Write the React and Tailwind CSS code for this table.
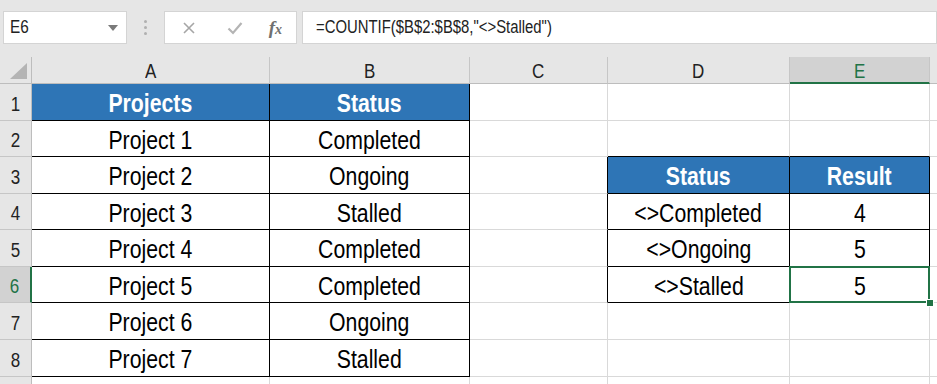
import React from 'react';

const COLS = ['A', 'B', 'C', 'D', 'E'];

// sheet contents, keyed by row number
const cells = {
  1: { A: 'Projects', B: 'Status' },
  2: { A: 'Project 1', B: 'Completed' },
  3: { A: 'Project 2', B: 'Ongoing', D: 'Status', E: 'Result' },
  4: { A: 'Project 3', B: 'Stalled', D: '<>Completed', E: '4' },
  5: { A: 'Project 4', B: 'Completed', D: '<>Ongoing', E: '5' },
  6: { A: 'Project 5', B: 'Completed', D: '<>Stalled', E: '5' },
  7: { A: 'Project 6', B: 'Ongoing' },
  8: { A: 'Project 7', B: 'Stalled' },
};

const heads = [
  [1, 'A'], [1, 'B'], [3, 'D'], [3, 'E'],
];

const inTable = (r, c) =>
  ((c === 'A' || c === 'B') && r >= 1 && r <= 8) ||
  ((c === 'D' || c === 'E') && r >= 3 && r <= 6);

const isHead = (r, c) => heads.some(([hr, hc]) => hr === r && hc === c);

const nextCol = (c) => COLS[COLS.indexOf(c) + 1];

function Txt({ children, className = '' }) {
  return <span className={`inline-block scale-x-[0.85] whitespace-nowrap ${className}`}>{children}</span>;
}

function Cell({ r, c }) {
  const right = inTable(r, c) || inTable(r, nextCol(c)) ? 'border-r-black' : 'border-r-[#d9d9d9]';
  const bottom = inTable(r, c) || inTable(r + 1, c) ? 'border-b-black' : 'border-b-[#d9d9d9]';
  const head = isHead(r, c);
  const value = cells[r]?.[c];
  const selected = r === 6 && c === 'E';
  return (
    <div
      className={`relative flex items-center justify-center pt-[3px] border-r border-b ${right} ${bottom} ${
        head ? 'bg-[#2e75b6] text-white font-bold' : 'bg-white text-black'
      } ${selected ? 'z-10' : ''} text-[25px] leading-none`}
    >
      {value && <Txt>{value}</Txt>}
      {selected && (
        <>
          <div className="absolute -left-px -top-px -right-px -bottom-px border-2 border-[#217346]" />
          <div className="absolute -right-[5px] -bottom-[5px] w-[8px] h-[8px] bg-[#217346] border border-white" />
        </>
      )}
    </div>
  );
}

function FormulaBar() {
  return (
    <div className="h-[57px] bg-[#e6e6e6] flex items-start pt-[11px] pl-[3px]">
      <div className="w-[124px] h-[33px] bg-white border border-[#d4d4d4] flex items-center justify-between pl-[6px] pr-[8px]">
        <Txt className="origin-left text-[18px] text-[#222]">E6</Txt>
        <svg width="10" height="6" viewBox="0 0 10 6">
          <path d="M0 0 L10 0 L5 6 Z" fill="#7a7a7a" />
        </svg>
      </div>
      <div className="w-[37px] h-[33px] flex flex-col items-center justify-center gap-[3px]">
        <div className="w-[3px] h-[3px] rounded-full bg-[#b0b0b0]" />
        <div className="w-[3px] h-[3px] rounded-full bg-[#b0b0b0]" />
        <div className="w-[3px] h-[3px] rounded-full bg-[#b0b0b0]" />
      </div>
      <div className="w-[133px] h-[33px] bg-white border border-[#d4d4d4] flex items-center pl-[17px] pr-[14px]">
        <svg width="14" height="14" viewBox="0 0 14 14">
          <path d="M2 2 L12 12 M12 2 L2 12" stroke="#a6a6a6" strokeWidth="1.6" />
        </svg>
        <svg className="ml-[31px]" width="16" height="14" viewBox="0 0 16 14">
          <path d="M1.5 7.5 L6 12 L14.5 2" stroke="#b4b4b4" strokeWidth="2.2" fill="none" />
        </svg>
        <span className="ml-auto font-['Liberation_Serif'] italic font-bold text-[19px] text-[#707070] leading-none">
          f<span className="text-[14px]">x</span>
        </span>
      </div>
      <div className="ml-[5px] flex-1 h-[33px] bg-white border border-[#d4d4d4] flex items-center pl-[13px]">
        <Txt className="origin-left text-[17.5px] text-[#222]">=COUNTIF($B$2:$B$8,"&lt;&gt;Stalled")</Txt>
      </div>
    </div>
  );
}

export default function App() {
  const rows = [1, 2, 3, 4, 5, 6, 7, 8];
  return (
    <div className="w-[937px] h-[384px] overflow-hidden bg-white font-['Liberation_Sans',Arial,sans-serif]">
      <FormulaBar />
      <div className="grid grid-cols-[32px_238px_200px_138px_182px_140px_7px] grid-rows-[27px_37px_36px_37px_36px_37px_36px_37px_37px_7px]">
        {/* corner + column letters */}
        <div className="relative bg-[#e6e6e6] border-r border-b border-[#bdbdbd]">
          <svg className="absolute right-[4px] bottom-[4px]" width="17" height="16" viewBox="0 0 17 16">
            <path d="M17 0 L17 16 L0 16 Z" fill="#b4b4b4" />
          </svg>
        </div>
        {COLS.map((c) =>
          c === 'E' ? (
            <div
              key={c}
              className="flex items-center justify-center pt-[2px] bg-[#d2d2d2] border-r border-r-[#c6c6c6] border-b-2 border-b-[#217346] text-[#217346] text-[20px] leading-none"
            >
              <Txt>{c}</Txt>
            </div>
          ) : (
            <div
              key={c}
              className="flex items-center justify-center pt-[2px] bg-[#e6e6e6] border-r border-r-[#c6c6c6] border-b border-b-[#bdbdbd] text-[#222] text-[20px] leading-none"
            >
              <Txt>{c}</Txt>
            </div>
          )
        )}
        <div className="bg-[#e6e6e6] border-b border-b-[#bdbdbd]" />

        {rows.map((r) => (
          <React.Fragment key={r}>
            {r === 6 ? (
              <div className="flex items-center justify-center pt-[3px] bg-[#d2d2d2] border-r-2 border-r-[#217346] border-b border-b-[#c6c6c6] text-[#217346] text-[20px] leading-none">
                <Txt>{r}</Txt>
              </div>
            ) : (
              <div className="flex items-center justify-center pt-[3px] bg-[#e6e6e6] border-r border-r-[#bdbdbd] border-b border-b-[#c6c6c6] text-[#222] text-[20px] leading-none">
                <Txt>{r}</Txt>
              </div>
            )}
            {COLS.map((c) => (
              <Cell key={c} r={r} c={c} />
            ))}
            <div className="bg-white border-b border-b-[#d9d9d9]" />
          </React.Fragment>
        ))}

        {/* partly visible row 9 */}
        <div className="bg-[#e6e6e6] border-r border-r-[#bdbdbd]" />
        <div className="border-r border-r-[#d9d9d9]" />
        <div className="border-r border-r-[#d9d9d9]" />
        <div className="border-r border-r-[#d9d9d9]" />
        <div className="border-r border-r-[#d9d9d9]" />
        <div className="border-r border-r-[#d9d9d9]" />
        <div />
      </div>
    </div>
  );
}
